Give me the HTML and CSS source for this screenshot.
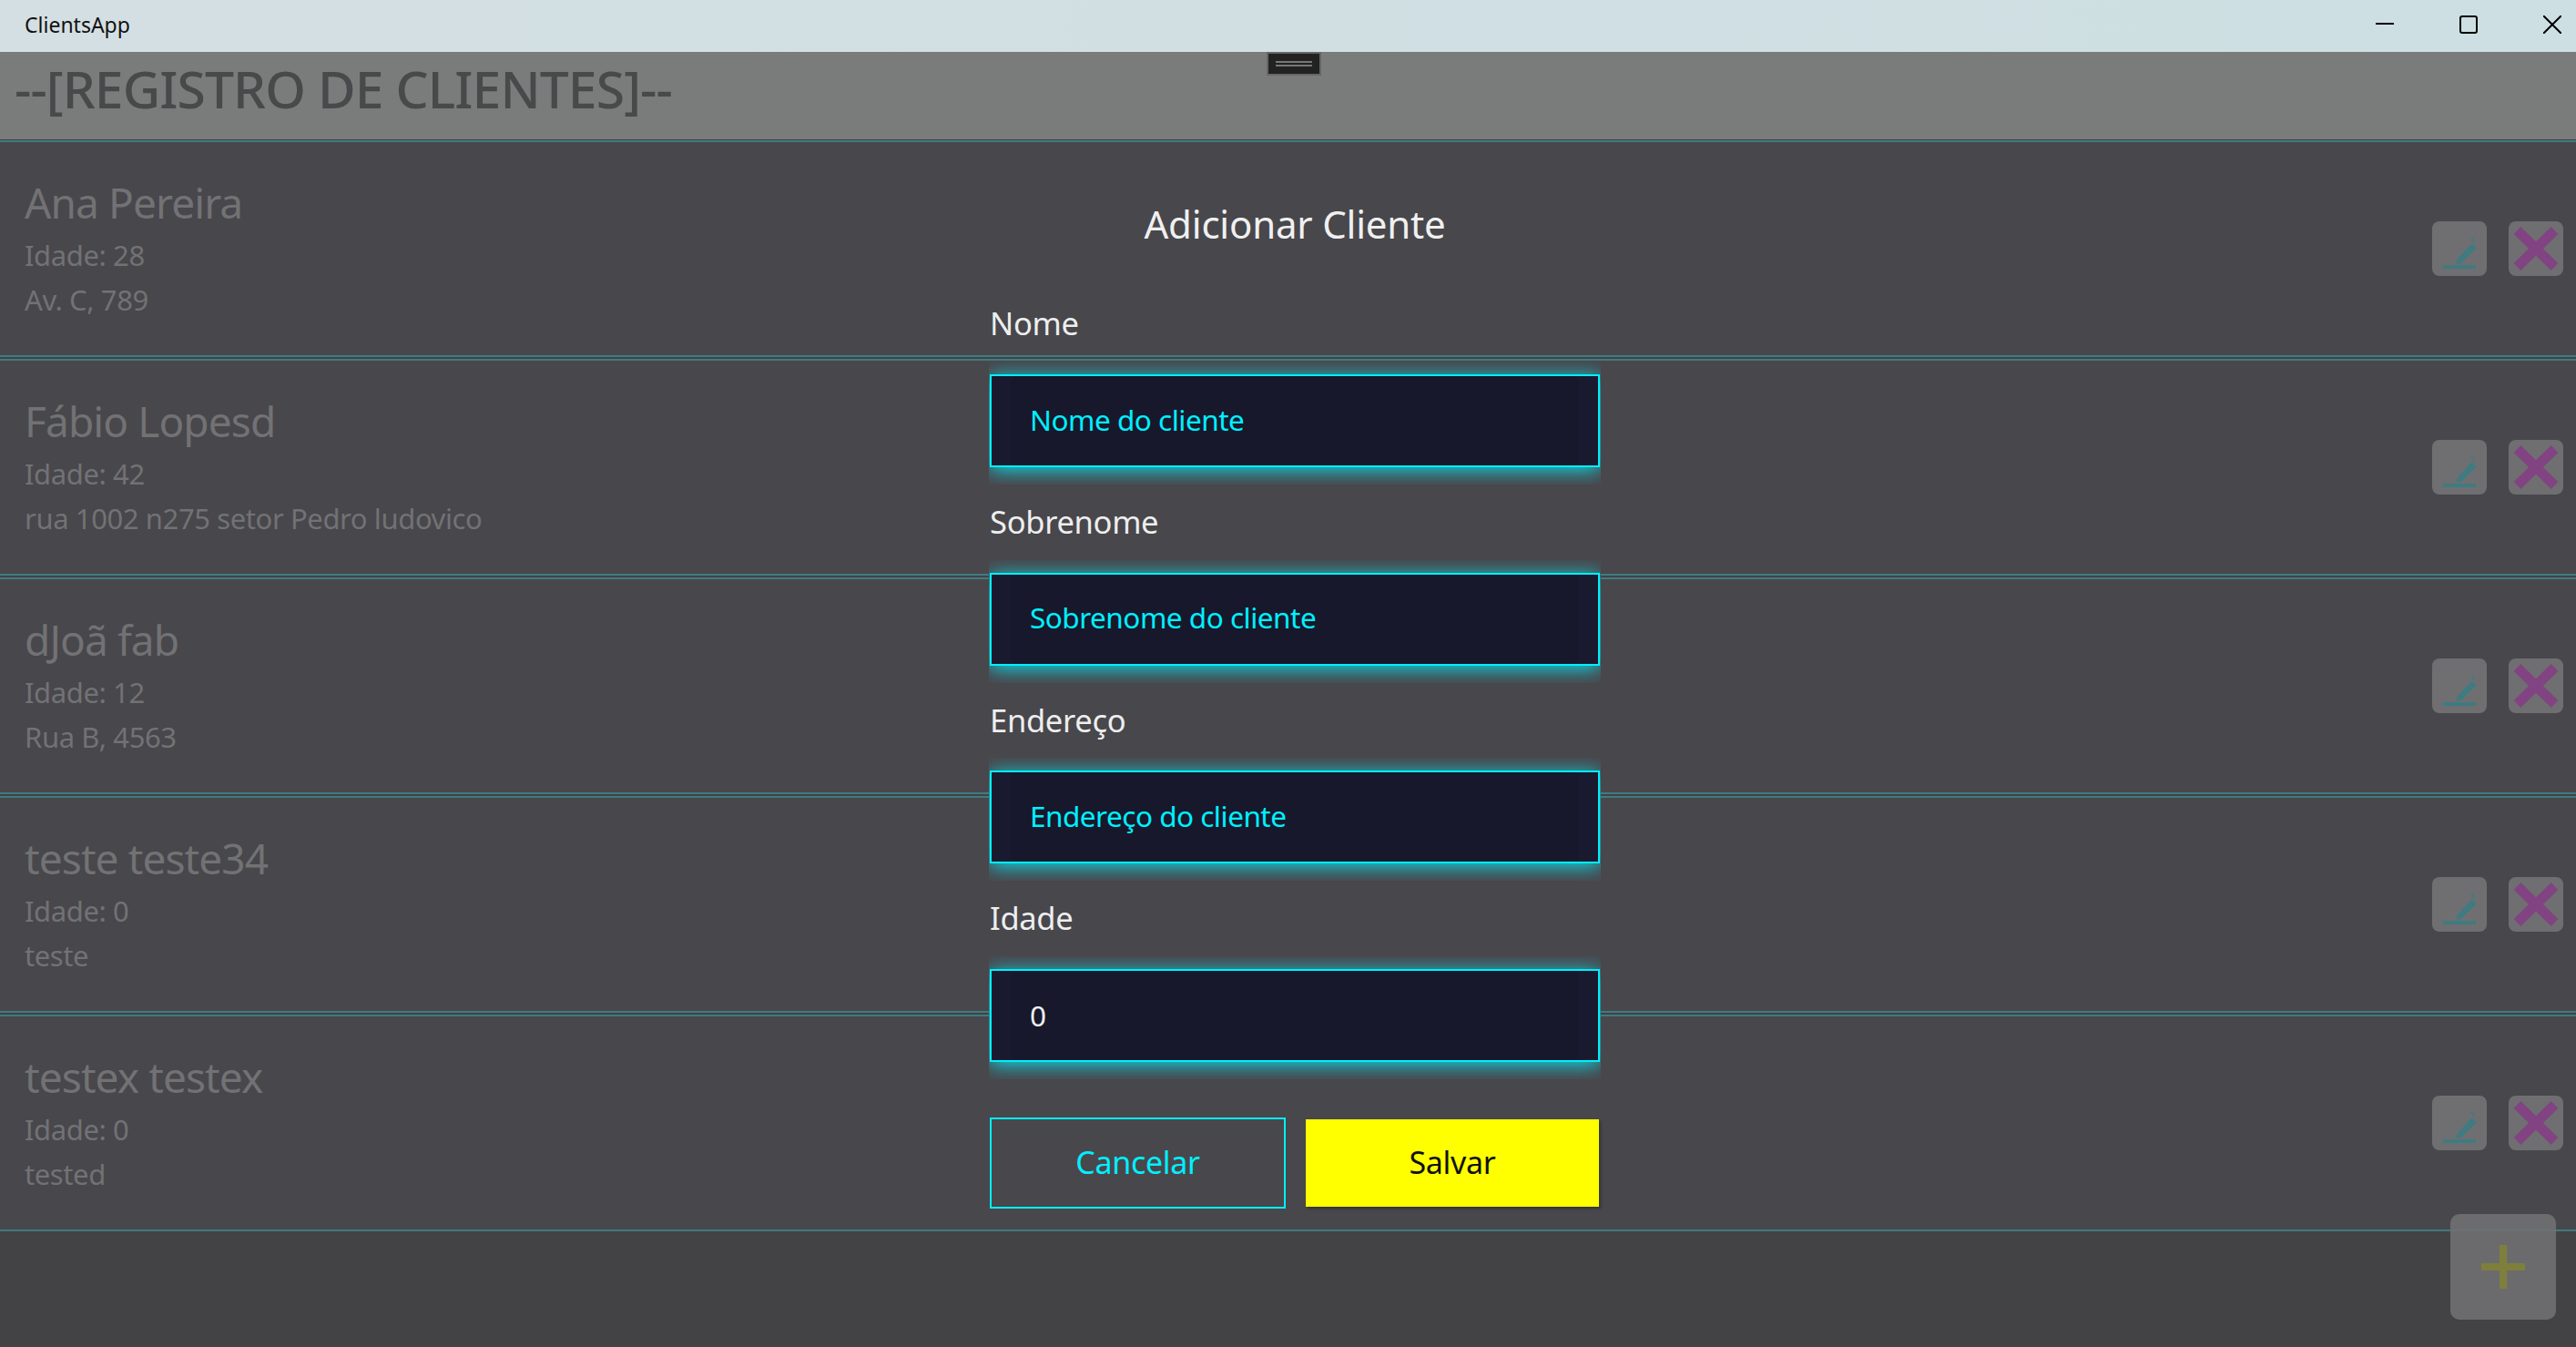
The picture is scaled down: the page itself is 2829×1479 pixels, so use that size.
FILE: index.html
```html
<!DOCTYPE html>
<html lang="pt">
<head>
<meta charset="UTF-8">
<title>ClientsApp</title>
<link rel="stylesheet" href="styles.css">
</head>
<body>
<div class="app">
	<div class="titlebar">
		<span class="app-name">ClientsApp</span>
		<div class="win-btns">
			<svg class="win-btn" viewBox="0 0 20 20"><path d="M0 9h20" /></svg>
			<svg class="win-btn" viewBox="0 0 20 20"><rect x="1" y="1" width="18" height="18" rx="2" /></svg>
			<svg class="win-btn" viewBox="0 0 20 20"><path d="M0 0L20 20M20 0L0 20" /></svg>
		</div>
	</div>

	<div class="header">--[REGISTRO DE CLIENTES]--</div>

	<div class="list">
		<div class="row">
			<div class="info">
				<div class="name">Ana Pereira</div>
				<div class="sub">Idade: 28</div>
				<div class="sub">Av. C, 789</div>
			</div>
			<div class="actions">
				<div class="act"><svg viewBox="0 0 60 60"><use href="#ico-edit" /></svg></div>
				<div class="act"><svg viewBox="0 0 60 60"><use href="#ico-del" /></svg></div>
			</div>
		</div>
		<div class="row">
			<div class="info">
				<div class="name">Fábio Lopesd</div>
				<div class="sub">Idade: 42</div>
				<div class="sub">rua 1002 n275 setor Pedro ludovico</div>
			</div>
			<div class="actions">
				<div class="act"><svg viewBox="0 0 60 60"><use href="#ico-edit" /></svg></div>
				<div class="act"><svg viewBox="0 0 60 60"><use href="#ico-del" /></svg></div>
			</div>
		</div>
		<div class="row">
			<div class="info">
				<div class="name">dJoã fab</div>
				<div class="sub">Idade: 12</div>
				<div class="sub">Rua B, 4563</div>
			</div>
			<div class="actions">
				<div class="act"><svg viewBox="0 0 60 60"><use href="#ico-edit" /></svg></div>
				<div class="act"><svg viewBox="0 0 60 60"><use href="#ico-del" /></svg></div>
			</div>
		</div>
		<div class="row">
			<div class="info">
				<div class="name">teste teste34</div>
				<div class="sub">Idade: 0</div>
				<div class="sub">teste</div>
			</div>
			<div class="actions">
				<div class="act"><svg viewBox="0 0 60 60"><use href="#ico-edit" /></svg></div>
				<div class="act"><svg viewBox="0 0 60 60"><use href="#ico-del" /></svg></div>
			</div>
		</div>
		<div class="row">
			<div class="info">
				<div class="name">testex testex</div>
				<div class="sub">Idade: 0</div>
				<div class="sub">tested</div>
			</div>
			<div class="actions">
				<div class="act"><svg viewBox="0 0 60 60"><use href="#ico-edit" /></svg></div>
				<div class="act"><svg viewBox="0 0 60 60"><use href="#ico-del" /></svg></div>
			</div>
		</div>
	</div>
</div>

<div class="handle"><i></i><i></i></div>

<div class="add-btn">
	<svg viewBox="0 0 48 48"><path d="M20 0h8v20h20v8H28v20h-8V28H0v-8h20z" /></svg>
</div>

<!-- dialog -->
<div class="modal">
	<div class="modal-title">Adicionar Cliente</div>

	<div class="label">Nome</div>
	<div class="glow"><div class="field"><div class="field-in hint">Nome do cliente</div></div></div>

	<div class="label">Sobrenome</div>
	<div class="glow"><div class="field"><div class="field-in hint">Sobrenome do cliente</div></div></div>

	<div class="label">Endereço</div>
	<div class="glow"><div class="field"><div class="field-in hint">Endereço do cliente</div></div></div>

	<div class="label">Idade</div>
	<div class="glow"><div class="field"><div class="field-in">0</div></div></div>

	<div class="modal-btns">
		<div class="btn btn-cancel">Cancelar</div>
		<div class="btn btn-save">Salvar</div>
	</div>
</div>

<svg class="defs" width="0" height="0">
	<symbol id="ico-edit" viewBox="0 0 60 60">
		<path fill="#3f7b80" d="M12 48h36v4H12zM26 47l2-6 15-16 6 4-17 17zM42 19l2-1 3 4-1 3-1-3z" />
	</symbol>
	<symbol id="ico-del" viewBox="0 0 60 60">
		<path stroke="#824382" stroke-width="11" d="M9.5 10L50.5 50M50.5 10L9.5 50" />
	</symbol>
</svg>
</body>
</html>
```

FILE: styles.css
```css
html,body,div,span,svg { margin:0; padding:0; }
html,body { width:100%; height:100%; overflow:hidden; }
body { position:relative; background:#434244; font-family:"Noto Sans","Open Sans",sans-serif; }

.app { display:flex; flex-direction:column; height:100%; }

/* title bar */
.titlebar { height:57px; flex:none; display:flex; align-items:center; justify-content:space-between; padding:0 16px 0 27px; background:linear-gradient(90deg,#d4dfe3,#cddfe2); }
.app-name { font-size:23px; letter-spacing:0; color:#111; position:relative; top:-2px; }
.win-btns { display:flex; gap:72px; position:relative; top:-2px; }
.win-btn { width:20px; height:20px; display:block; fill:none; stroke:#000; stroke-width:2; }

/* header */
.header { height:97px; flex:none; box-sizing:border-box; border-bottom:1px solid #3f3f42; padding-left:16px; font-size:57px; line-height:80px; font-weight:500; color:#48494a; background:#7a7c7b; letter-spacing:-0.9px; white-space:nowrap; }

/* client list */
.list { display:flex; flex-direction:column; gap:2px; }
.row { height:238px; box-sizing:border-box; border-top:2px solid #3f7b80; border-bottom:2px solid #3f7b80; background:#48474c; display:flex; align-items:center; justify-content:space-between; padding:0 14px 0 27px; }
.info { display:flex; flex-direction:column; color:#727274; position:relative; top:-1px; }
.name { font-size:46px; line-height:64px; margin-bottom:2px; letter-spacing:-0.9px; }
.sub { font-size:31px; line-height:49px; letter-spacing:-0.4px; }
.actions { display:flex; gap:24px; }
.act { width:60px; height:60px; background:#6f6f71; border-radius:8px; }
.act svg { display:block; width:60px; height:60px; }
.defs { position:absolute; }

/* overlay bits */
.handle { position:absolute; left:1391px; top:57px; width:60px; height:26px; box-sizing:border-box; border:2px solid #666; background:#222; display:flex; flex-direction:column; align-items:center; justify-content:center; gap:2px; }
.handle i { display:block; width:40px; height:2px; background:#777; }

.add-btn { position:absolute; left:2691px; top:1333px; width:116px; height:116px; border-radius:10px; background:rgba(112,112,114,.9); display:flex; align-items:center; justify-content:center; }
.add-btn svg { display:block; width:48px; height:48px; fill:#7f7f3d; }

/* dialog */
.modal { position:absolute; left:1086px; top:0; width:672px; color:#eee; }
.modal-title { margin-top:215px; height:62px; line-height:62px; text-align:center; font-size:42px; letter-spacing:-0.2px; color:#f0f0f0; }
.label { height:82.67px; padding-left:1px; line-height:82px; font-size:34.5px; letter-spacing:-0.3px; }
.modal-title + .label { height:120px; line-height:156px; }
.glow { height:135px; box-sizing:border-box; padding:14px 1px 0; overflow:hidden; background:#48474c; }
.field { height:102px; box-sizing:border-box; border:2px solid #00f0ff; padding:0 21px; background:#191a2f; box-shadow:0 3px 20px rgba(0,240,255,.9); }
.field-in { height:100%; padding:0 0 0 21px; box-sizing:border-box; border-radius:8px; background:#17182c; display:flex; align-items:center; font-size:31.5px; letter-spacing:-0.5px; color:#eee; }
.field-in.hint { color:#00f0ff; padding-bottom:4px; }
.modal-btns { display:flex; align-items:center; justify-content:space-between; margin:42px 2px 0 1px; }
.btn { display:flex; align-items:center; justify-content:center; box-sizing:border-box; font-size:34px; letter-spacing:-0.3px; padding-bottom:2px; }
.btn-cancel { width:325px; height:100px; border:2px solid #00f0ff; color:#00f0ff; }
.btn-save { width:322px; height:96px; background:#ffff00; color:#111; box-shadow:2px 2px 3px rgba(0,0,0,.3); }
```
